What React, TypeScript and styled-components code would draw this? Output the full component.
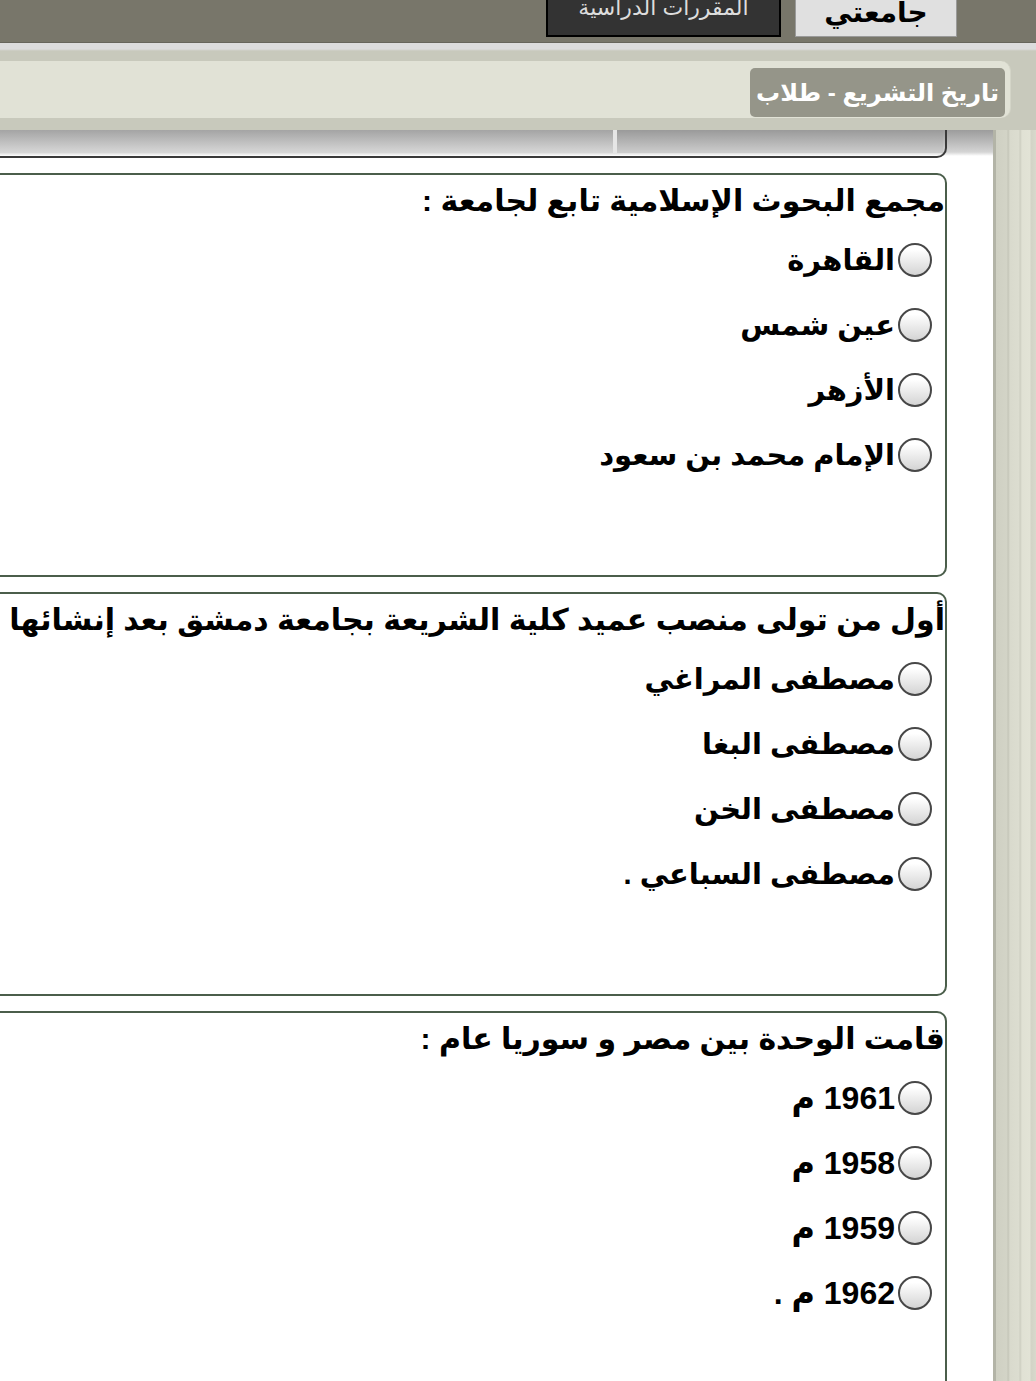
import styled, { createGlobalStyle, css } from 'styled-components';

const GlobalStyle = createGlobalStyle`
  html, body {
    margin: 0;
    padding: 0;
    overflow: hidden;
    background: #fff;
  }
  body {
    font-family: "Liberation Sans", "DejaVu Sans", sans-serif;
  }
`;

type Question = { text: string; options: string[]; numeric?: boolean };

const questions: Question[] = [
  {
    text: 'مجمع البحوث الإسلامية تابع لجامعة :',
    options: ['القاهرة', 'عين شمس', 'الأزهر', 'الإمام محمد بن سعود'],
  },
  {
    text: 'أول من تولى منصب عميد كلية الشريعة بجامعة دمشق بعد إنشائها هو :',
    options: ['مصطفى المراغي', 'مصطفى البغا', 'مصطفى الخن', 'مصطفى السباعي .'],
  },
  {
    text: 'قامت الوحدة بين مصر و سوريا عام :',
    options: ['1961 م', '1958 م', '1959 م', '1962 م .'],
    numeric: true,
  },
];

const App = () => (
  <>
    <GlobalStyle />
    <Page>
      <TopBar>
        <Tab $active>جامعتي</Tab>
        <Tab>المقررات الدراسية</Tab>
      </TopBar>
      <TitleStrip>
        <TitlePanel>
          <TitleChip>تاريخ التشريع - طلاب</TitleChip>
        </TitlePanel>
      </TitleStrip>
      <Body>
        <SideRail />
        <Content>
          <TableTail>
            <TailCell $width={326} />
            <TailDivider />
            <TailCell $light />
          </TableTail>
          {questions.map((q, qi) => (
            <QuestionBox key={qi}>
              <QuestionText>{q.text}</QuestionText>
              {q.options.map((opt, oi) => (
                <OptionRow key={oi}>
                  <Radio />
                  <OptionLabel $numeric={q.numeric}>{opt}</OptionLabel>
                </OptionRow>
              ))}
            </QuestionBox>
          ))}
        </Content>
      </Body>
    </Page>
  </>
);

const Page = styled.div`
  direction: rtl;
  width: 1036px;
  height: 1381px;
  overflow: hidden;
  display: flex;
  flex-direction: column;
`;

const TopBar = styled.div`
  height: 42px;
  flex: none;
  background: #78766a;
  display: flex;
  align-items: flex-start;
  gap: 14px;
  padding-right: 79px;
  overflow: hidden;
`;

const Tab = styled.div<{ $active?: boolean }>`
  box-sizing: border-box;
  margin-top: -22px;
  height: 59px;
  display: flex;
  justify-content: center;
  align-items: flex-start;
  white-space: nowrap;
  ${({ $active }) =>
    $active
      ? css`
          width: 162px;
          background: #e0e0e0;
          border: 1px solid #9a9a9a;
          color: #000;
          font-size: 28px;
          font-weight: 700;
          line-height: 30px;
          padding-top: 19px;
        `
      : css`
          width: 235px;
          background: #333;
          border: 2px solid #000;
          color: #ddd;
          font-size: 22px;
          line-height: 24px;
          padding-top: 16px;
        `}
`;

const TitleStrip = styled.div`
  height: 88px;
  flex: none;
  box-sizing: border-box;
  border-top: 1px solid #66655b;
  background: linear-gradient(#dcdcdc 0, #dcdcdc 6px, #c8c9bc 8px, #c8c9bc 100%);
  padding: 18px 25px 0 0;
`;

const TitlePanel = styled.div`
  height: 57px;
  box-sizing: border-box;
  background: #e1e2d6;
  border-radius: 0 10px 10px 0;
  border-right: 1px solid #d4d5c8;
  padding: 7px 5px 1px 0;
  display: flex;
`;

const TitleChip = styled.div`
  background: #959589;
  border-radius: 5px;
  color: #fff;
  font-size: 24px;
  font-weight: 700;
  line-height: 49px;
  padding: 0 6px;
  white-space: nowrap;
`;

const Body = styled.div`
  flex: 1;
  display: flex;
  background: linear-gradient(#9c9c9c 0, #d4d4d4 22px, #fff 26px) top / 100% 28px no-repeat, #fff;
`;

const SideRail = styled.div`
  width: 43px;
  flex: none;
  background: linear-gradient(
    to right,
    #b3b4a7 0,
    #b3b4a7 3px,
    #cfd0c3 3px,
    #d3d4c7 14px,
    #c3c4b7 15px,
    #d9dacd 17px,
    #dcddd0 26px,
    #cccdc0 27px,
    #e0e1d4 29px,
    #e2e3d6 37px,
    #d2d3c6 38px,
    #d8d9cc 43px
  );
`;

const Content = styled.div`
  flex: 1;
  margin-right: 46px;
  margin-left: -40px;
  display: flex;
  flex-direction: column;
  gap: 15px;
`;

const TableTail = styled.div`
  height: 28px;
  flex: none;
  box-sizing: border-box;
  border-right: 2px solid #3a3a3a;
  border-bottom: 2px solid #3a3a3a;
  border-bottom-right-radius: 10px;
  padding: 0 2px 3px 0;
  display: flex;
`;

const TailCell = styled.div<{ $width?: number; $light?: boolean }>`
  ${({ $width }) => ($width ? `width: ${$width}px; flex: none;` : 'flex: 1;')}
  background: ${({ $light }) =>
    $light ? 'linear-gradient(#a4a4a4, #d8d8d8)' : 'linear-gradient(#9a9a9a, #cdcdcd)'};
`;

const TailDivider = styled.div`
  width: 4px;
  background: #e6e6e6;
`;

const QuestionBox = styled.div`
  height: 404px;
  flex: none;
  box-sizing: border-box;
  border: 2px solid #4b5e4b;
  border-radius: 10px;
  background: #fff;
`;

const QuestionText = styled.div`
  height: 52px;
  line-height: 52px;
  font-size: 30px;
  font-weight: 700;
  color: #000;
  white-space: nowrap;
`;

const OptionRow = styled.div`
  height: 65px;
  display: flex;
  align-items: center;
  padding-right: 13px;
`;

const Radio = styled.span`
  width: 34px;
  height: 34px;
  flex: none;
  box-sizing: border-box;
  border: 2.5px solid #474747;
  border-radius: 50%;
  background: linear-gradient(#ffffff 15%, #d4d4d4);
`;

const OptionLabel = styled.span<{ $numeric?: boolean }>`
  margin-right: 3px;
  font-size: ${({ $numeric }) => ($numeric ? '32px' : '29px')};
  font-weight: 700;
  color: #000;
  white-space: nowrap;
`;

export default App;
